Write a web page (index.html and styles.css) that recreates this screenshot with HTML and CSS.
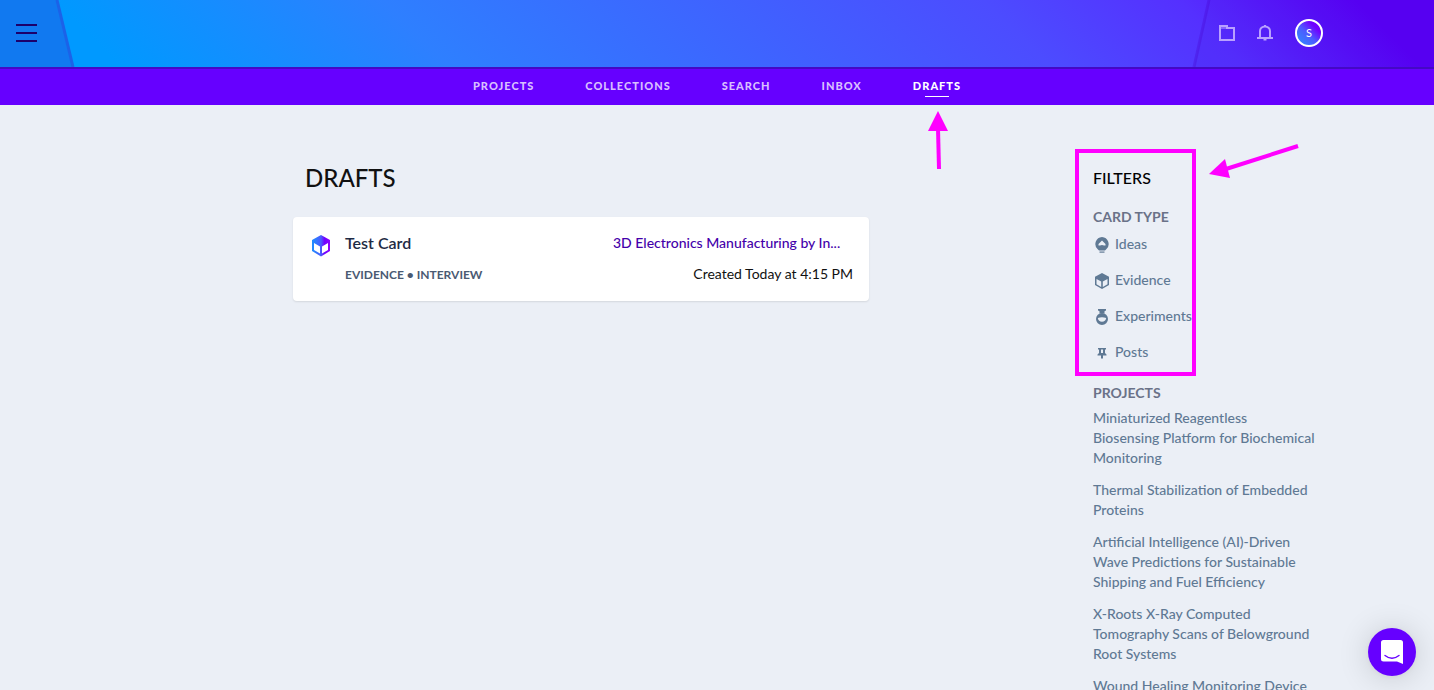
FILE: index.html
```html
<!DOCTYPE html>
<html lang="en">
<head>
  <meta charset="UTF-8" />
  <meta name="viewport" content="width=device-width, initial-scale=1.0"/>
  <title>Drafts</title>
  <link rel="stylesheet" href="styles.css">
</head>
<body>
<header class="topbar">
  <svg class="topbar-left" width="76" height="67" viewBox="0 0 76 67" aria-hidden="true">
    <path d="M0 0H57L73 67H0Z" fill="#1179f0"/>
    <path d="M57 0L73 67" stroke="#1c62e8" stroke-width="3"/>
  </svg>
  <svg class="topbar-right" width="242" height="67" viewBox="0 0 242 67" aria-hidden="true">
    <path d="M17 0H242V67H2Z" fill="#40c" fill-opacity="0.08"/>
    <path d="M17 0L2 67" stroke="#40c" stroke-opacity="0.3" stroke-width="3"/>
  </svg>
  <button class="icon-button" aria-label="Menu">
    <svg width="21" height="18" viewBox="0 0 21 18"><path d="M0 1H21M0 9H21M0 17H21" stroke="#1c006b" stroke-width="2"/></svg>
  </button>
  <div class="tools">
    <button class="icon-button" aria-label="Files">
      <svg width="16" height="16" viewBox="0 0 16 16" fill="none" stroke="#b9a0ff" stroke-width="2"><path d="M1 15V1H8V3H15V15Z"/><path d="M1 3H9" stroke-width="1"/></svg>
    </button>
    <button class="icon-button" aria-label="Notifications">
      <svg width="16" height="16" viewBox="0 0 16 16" fill="none" stroke="#b9a0ff" stroke-width="2"><path d="M3 13V6A5 4.500 0 0 1 13 6V13M0 13H16"/><path d="M6.500 14.500H9.500M7 .8H9" stroke-width="2"/></svg>
    </button>
    <button class="avatar">S</button>
  </div>
</header>
<nav class="nav">
  <a href="#">Projects</a>
  <a href="#">Collections</a>
  <a href="#">Search</a>
  <a href="#">Inbox</a>
  <a href="#" class="active">Drafts
    <svg class="arrow-up" width="22" height="60" viewBox="0 0 22 60"><path d="M10 1L20 21H0Z" fill="#f0f"/><path d="M10 18L11 59" stroke="#f0f" stroke-width="4"/></svg>
  </a>
</nav>

<main class="page">
  <section class="drafts">
    <h1>DRAFTS</h1>
    <article class="card">
      <svg class="card-icon" width="18" height="22" viewBox="0 0 18 22">
        <defs>
          <linearGradient id="cube" x1="0" y1="0" x2="1" y2="0"><stop offset="0" stop-color="#1c8fff"/><stop offset="0.5" stop-color="#4b5bff"/><stop offset="0.7" stop-color="#7000ff"/><stop offset="1" stop-color="#9000ff"/></linearGradient>
        </defs>
        <path fill="url(#cube)" fill-rule="evenodd" d="M9 0L18 5V16L9 21.500L0 16V5ZM2 8V15L8 18.600V11.500ZM16 8V15L10 18.600V11.500Z"/>
      </svg>
      <div class="card-body">
        <div class="card-row">
          <h2>Test Card</h2>
          <a href="#" class="card-project">3D Electronics Manufacturing by In...</a>
        </div>
        <div class="card-row">
          <span class="card-type">EVIDENCE • INTERVIEW</span>
          <span class="card-date">Created Today at 4:15 PM</span>
        </div>
      </div>
    </article>
  </section>

  <aside class="sidebar">
    <div class="filters">
      <h2>FILTERS</h2>
      <h3>CARD TYPE</h3>
      <ul class="types">
        <li><button><svg width="14" height="16" viewBox="0 0 14 16" fill="currentColor"><path fill-rule="evenodd" d="M7 0A7 7 0 0 1 11.500 12L10 13.500H4L2.500 12A7 7 0 0 1 7 0ZM7 3.500L3.500 7V8.500H5Q7 7.500 9 8.500H10.500V7Z"/><path d="M4.500 14.500H9.500V15.700H4.500Z"/></svg>Ideas</button></li>
        <li><button><svg width="14" height="16" viewBox="0 0 14 16" fill="currentColor"><path fill-rule="evenodd" d="M7 0L14 3.800V12L7 16L0 12V3.800ZM1.500 6V11.200L6.200 13.900V8.500ZM12.500 6V11.200L7.800 13.900V8.500Z"/></svg>Evidence</button></li>
        <li><button><svg width="14" height="16" viewBox="0 0 14 16" fill="currentColor"><path d="M3 0H11V1.500L9.500 2.200V4.500H4.500V2.200L3 1.500Z"/><path fill-rule="evenodd" d="M7 4A6 6 0 1 1 7 16A6 6 0 1 1 7 4ZM2.800 9A4.300 4.800 0 0 0 11.200 9Q7 7.500 2.800 9Z"/></svg>Experiments</button></li>
        <li><button><svg width="14" height="16" viewBox="0 0 14 16" fill="currentColor"><path fill-rule="evenodd" d="M3 3H11V4.500H10V8L11.500 9.500V10.500H8V13.500H6V10.500H2.500V9.500L4 8V4.500H3ZM6 4.500V8H8V4.500Z"/></svg>Posts</button></li>
      </ul>
      <div class="highlight"></div>
      <svg class="arrow-left" width="92" height="36" viewBox="0 0 92 36"><path d="M1 31L17 16L22 35Z" fill="#f0f"/><path d="M18 26L90 3" stroke="#f0f" stroke-width="4"/></svg>
    </div>
    <h3>PROJECTS</h3>
    <ul class="projects">
      <li><a href="#">Miniaturized Reagentless<br>Biosensing Platform for Biochemical Monitoring</a></li>
      <li><a href="#">Thermal Stabilization of Embedded Proteins</a></li>
      <li><a href="#">Artificial Intelligence (AI)-Driven Wave Predictions for Sustainable Shipping and Fuel Efficiency</a></li>
      <li><a href="#">X-Roots X-Ray Computed Tomography Scans of Belowground Root Systems</a></li>
      <li><a href="#">Wound Healing Monitoring Device</a></li>
    </ul>
  </aside>
</main>

<button class="chat" aria-label="Open chat">
  <svg width="22" height="24" viewBox="0 0 22 24">
    <path d="M2.500 0H19.500Q22 0 22 2.500V24L16 21.500H2.500Q0 21.500 0 19V2.500Q0 0 2.500 0Z" fill="#fff"/>
    <path d="M4 15.500Q11 21 18 15.500" fill="none" stroke="#60f" stroke-width="1.400" stroke-linecap="round"/>
  </svg>
</button>
</body>
</html>
```
FILE: styles.css
```css
* {
  box-sizing: border-box;
}
body {
  margin: 0;
  height: 100vh;
  display: flex;
  flex-direction: column;
  background: #ebeff6;
  font-family: Lato, sans-serif;
  font-size: 14px;
  color: #111;
}
h1, h2, h3, ul {
  margin: 0;
  padding: 0;
  font-weight: 500;
}
ul {
  list-style: none;
}
a {
  color: inherit;
  text-decoration: none;
}
button {
  padding: 0;
  border: 0;
  background: none;
  font: inherit;
  color: inherit;
  cursor: pointer;
}
svg {
  display: block;
  flex: none;
}

/* top bar */
.topbar {
  position: relative;
  flex: none;
  display: flex;
  align-items: center;
  justify-content: space-between;
  height: 69px;
  padding: 0 111px 2px 16px;
  border-bottom: 2px solid #4409c4;
  background: linear-gradient(45deg, #09f 8%, #2e7fff 30%, #4c4cff 70%, #5530ff 83%, #5800f5 95%);
}
.topbar-left, .topbar-right {
  position: absolute;
  top: 0;
}
.topbar-left {
  left: 0;
}
.topbar-right {
  right: 0;
}
.icon-button, .tools {
  position: relative;
}
.tools {
  display: flex;
  align-items: center;
  gap: 22px;
}
.avatar {
  width: 28px;
  height: 28px;
  border: 2px solid #fff;
  border-radius: 50%;
  background: linear-gradient(45deg, #2e8fff, #4c5cff 45%, #7000ff 75%);
  color: #fff;
  font-size: 11px;
}

/* navigation */
.nav {
  flex: none;
  display: flex;
  align-items: center;
  justify-content: center;
  gap: 51px;
  height: 36px;
  padding-bottom: 3px;
  background: #60f;
  color: #d9bfff;
  font-size: 11px;
  font-weight: 900;
  letter-spacing: 1px;
  text-transform: uppercase;
}
.nav .active {
  position: relative;
  color: #fff;
}
.nav .active::after {
  content: "";
  position: absolute;
  left: 50%;
  bottom: -5px;
  width: 24px;
  height: 1px;
  margin-left: -12px;
  background: #fff;
}
.arrow-up {
  position: absolute;
  top: 31px;
  left: 15px;
}

/* page */
.page {
  flex: 1;
  min-height: 0;
  display: grid;
  grid-template-columns: 1fr 224px;
  gap: 48px;
  padding: 0 117px;
  overflow: hidden;
}
.drafts {
  width: 100%;
  max-width: 576px;
  margin: 0 auto;
  padding-top: 55px;
}
.drafts h1 {
  padding-left: 12px;
  font-size: 24px;
  line-height: 36px;
}
.card {
  display: flex;
  gap: 15px;
  margin-top: 21px;
  padding: 15px 16px 16px 19px;
  border-radius: 4px;
  background: #fff;
  box-shadow: 0 1px 2px rgba(0, 0, 0, 0.1);
}
.card-icon {
  margin-top: 3px;
}
.card-body {
  flex: 1;
  min-width: 0;
}
.card-row {
  display: flex;
  justify-content: space-between;
  align-items: center;
}
.card-row + .card-row {
  margin-top: 10px;
}
.card h2 {
  color: #1e2a44;
  font-size: 16px;
  font-weight: 600;
  line-height: 21px;
}
.card-project {
  width: 240px;
  color: #40a;
  font-size: 14px;
  font-weight: 500;
  line-height: 21px;
  white-space: nowrap;
}
.card-type {
  color: #4a5a73;
  font-size: 12px;
  font-weight: 700;
}
.card-date {
  line-height: 22px;
}

/* sidebar */
.sidebar {
  padding-top: 55px;
  color: #5f7994;
}
.filters {
  position: relative;
  padding-bottom: 21px;
}
.filters h2 {
  color: #000;
  font-size: 16px;
  line-height: 36px;
}
.sidebar h3 {
  color: #6a7288;
  font-size: 14px;
  font-weight: 700;
  line-height: 20px;
}
.filters h3 {
  margin-top: 11px;
}
.types {
  display: grid;
  gap: 16px;
  padding: 7px 0 0 2px;
}
.types li {
  height: 20px;
}
.types button {
  display: flex;
  align-items: center;
  gap: 6px;
  line-height: 20px;
}
.types svg {
  margin-top: 2px;
}
.highlight {
  position: absolute;
  top: -11px;
  left: -18px;
  width: 121px;
  height: 227px;
  border: 4px solid #f0f;
  pointer-events: none;
}
.arrow-left {
  position: absolute;
  top: -17px;
  left: 115px;
}
.projects {
  display: grid;
  gap: 12px;
  padding-top: 5px;
  line-height: 20px;
}

/* chat launcher */
.chat {
  position: fixed;
  right: 18px;
  bottom: 14px;
  display: flex;
  align-items: center;
  justify-content: center;
  width: 48px;
  height: 48px;
  border-radius: 50%;
  background: #60f;
  box-shadow: 0 1px 6px rgba(0, 0, 0, 0.06), 0 2px 32px rgba(0, 0, 0, 0.16);
}
```
